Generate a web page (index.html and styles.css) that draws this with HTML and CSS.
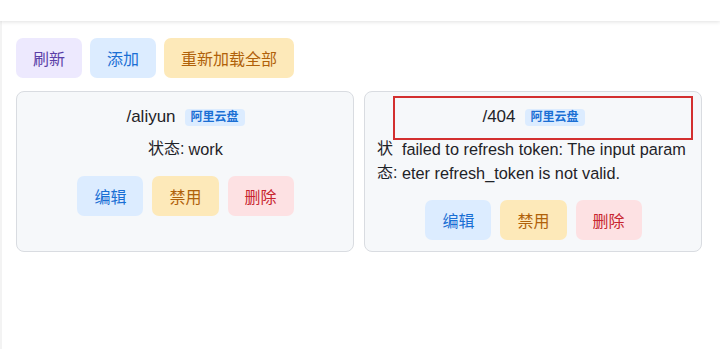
FILE: index.html
```html
<!DOCTYPE html>
<html lang="zh">
<head>
<meta charset="utf-8">
<link rel="stylesheet" href="styles.css">
</head>
<body>
<header class="topbar"></header>
<main class="main">
  <div class="toolbar">
    <button class="btn btn-purple">刷新</button>
    <button class="btn btn-blue">添加</button>
    <button class="btn btn-amber">重新加载全部</button>
  </div>
  <div class="cards">
    <div class="card">
      <div class="title"><span class="path">/aliyun</span><span class="badge">阿里云盘</span></div>
      <div class="status"><span class="label">状态:</span><span class="value">work</span></div>
      <div class="actions">
        <button class="btn btn-blue">编辑</button>
        <button class="btn btn-amber">禁用</button>
        <button class="btn btn-red">删除</button>
      </div>
    </div>
    <div class="card">
      <div class="title"><span class="path">/404</span><span class="badge">阿里云盘</span></div>
      <div class="status"><span class="label">状态:</span><span class="value">failed to refresh token: The input parameter refresh_token is not valid.</span></div>
      <div class="actions">
        <button class="btn btn-blue">编辑</button>
        <button class="btn btn-amber">禁用</button>
        <button class="btn btn-red">删除</button>
      </div>
      <div class="highlight"></div>
    </div>
  </div>
</main>
</body>
</html>
```
FILE: styles.css
```css
html, body {
  margin: 0;
  background: #ffffff;
  font-family: "Liberation Sans", Arial, "Noto Sans CJK SC", sans-serif;
  color: #1f2328;
}
.topbar {
  height: 21px;
  background: #fff;
  box-shadow: 0 1px 4px rgba(0, 0, 0, 0.12);
  position: relative;
  z-index: 1;
}
.main {
  padding: 17px 18px 0 14px;
  min-height: 328px;
  box-sizing: border-box;
  border-left: 2px solid #f3f3f3;
}
.toolbar {
  display: flex;
  gap: 8px;
}
.btn {
  height: 40px;
  padding: 0 17px;
  border: none;
  border-radius: 7px;
  font-family: "Liberation Sans", "Noto Sans CJK SC", sans-serif;
  font-size: 16px;
  cursor: pointer;
}
.btn-purple { background: #ede9fe; color: #5b3fa8; }
.btn-blue { background: #dcecff; color: #1a6fd4; }
.btn-amber { background: #fde9b9; color: #b0610a; }
.btn-red { background: #fde1e3; color: #c8242f; }
.cards {
  margin-top: 13px;
  display: grid;
  grid-template-columns: 1fr 1fr;
  gap: 10px;
}
.card {
  position: relative;
  background: #f6f8fa;
  border: 1px solid #d9dce1;
  border-radius: 8px;
  padding: 11px 11px 11px 12px;
}
.title {
  display: flex;
  justify-content: center;
  align-items: center;
  gap: 9px;
  height: 28px;
  font-size: 17px;
}
.badge {
  font-size: 12px;
  font-weight: 600;
  background: #dcecff;
  color: #1a6fd4;
  padding: 1px 6px;
  border-radius: 4px;
  line-height: 15px;
}
.status {
  margin-top: 6px;
  display: flex;
  justify-content: center;
  gap: 4px;
  font-size: 16px;
  line-height: 24px;
}
.label { flex: 0 1 auto; min-width: 0; }
.value { word-break: break-all; text-align: left; font-size: 16.3px; }
.actions {
  margin-top: 15px;
  display: flex;
  justify-content: center;
  gap: 9px;
}
.highlight {
  position: absolute;
  left: 28px;
  top: 4px;
  width: 296px;
  height: 40px;
  border: 2px solid #d32f2f;
  pointer-events: none;
}
```
